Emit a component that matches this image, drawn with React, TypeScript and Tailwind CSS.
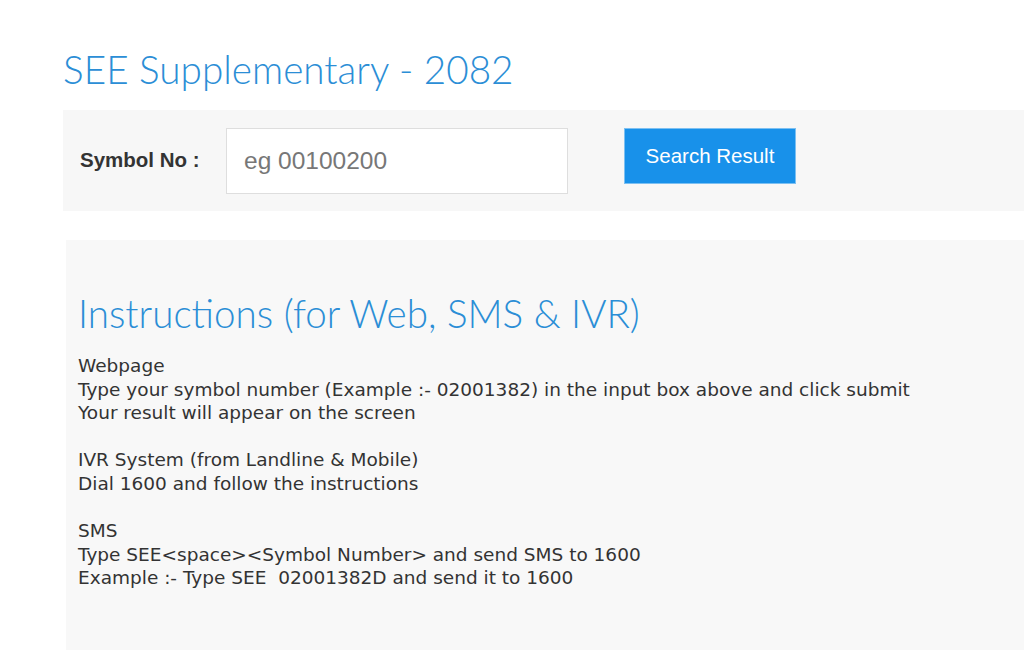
import React from "react";

export default function App() {
  const body = { fontFamily: '"DejaVu Sans", sans-serif' };
  const head = { fontFamily: 'Lato, "DejaVu Sans", sans-serif' };
  return (
    <div className="min-h-[650px] w-[1024px] overflow-hidden bg-white">
      <div className="pl-[63px]">
        <h1 className="pt-[45px] text-[38.7px] leading-[48px] font-light text-[#2b8ed6]" style={head}>
          SEE Supplementary - 2082
        </h1>
        <div className="mt-[17px] flex h-[101px] items-center bg-[#f7f7f7]" style={{ fontFamily: '"Liberation Sans", Arial, sans-serif' }}>
          <label className="ml-[17px] w-[146px] text-[20.5px] font-bold text-[#333]">Symbol No :</label>
          <input
            className="h-[66px] w-[342px] border border-[#dedede] bg-white px-[17px] text-[24.5px] text-[#555] placeholder:text-[#777] outline-none"
            placeholder="eg 00100200"
          />
          <button className="ml-[56px] mb-[9px] h-[56px] w-[172px] border border-[#7cc0f2] bg-[#1891ea] text-[20.5px] text-white">
            Search Result
          </button>
        </div>
        <div className="ml-[3px] mt-[29px] h-[410px] bg-[#f8f8f8] pl-[12px] pt-[49px] text-[#333]">
          <h2 className="text-[38.6px] leading-[48px] font-light text-[#2b8ed6]" style={head}>
            Instructions (for Web, SMS &amp; IVR)
          </h2>
          <div className="mt-[17px] text-[18.5px] leading-[23.6px]" style={body}>
            <p>Webpage</p>
            <p>Type your symbol number (Example :- 02001382) in the input box above and click submit</p>
            <p>Your result will appear on the screen</p>
            <p>&nbsp;</p>
            <p>IVR System (from Landline &amp; Mobile)</p>
            <p>Dial 1600 and follow the instructions</p>
            <p>&nbsp;</p>
            <p>SMS</p>
            <p>Type SEE&lt;space&gt;&lt;Symbol Number&gt; and send SMS to 1600</p>
            <p>Example :- Type SEE&nbsp; 02001382D and send it to 1600</p>
          </div>
        </div>
      </div>
    </div>
  );
}
